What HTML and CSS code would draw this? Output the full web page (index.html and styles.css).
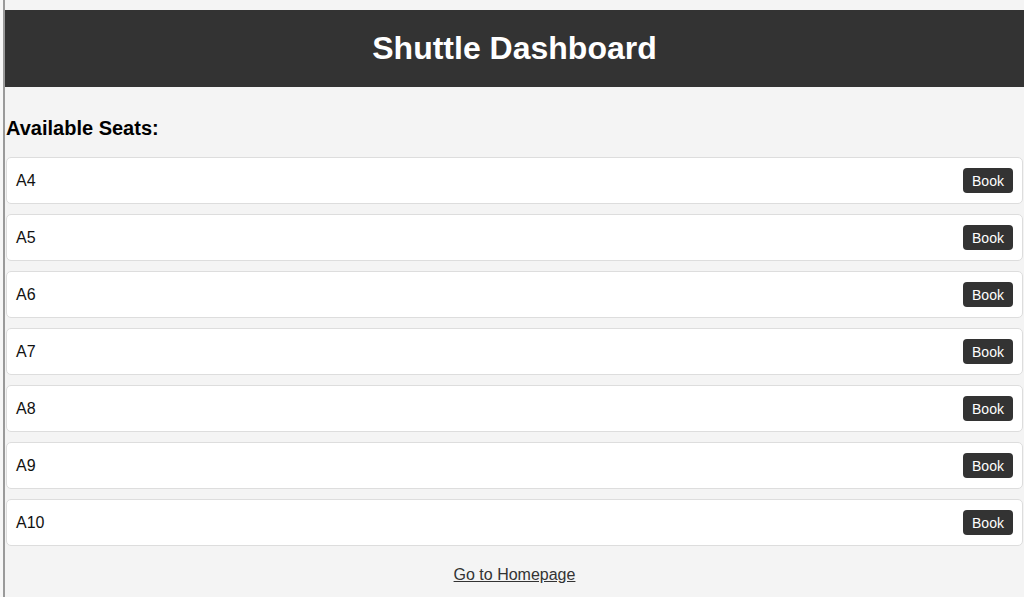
FILE: index.html
```html
<!DOCTYPE html>
<html lang="en">
<head>
<meta charset="utf-8">
<title>Shuttle Dashboard</title>
<link rel="stylesheet" href="styles.css">
</head>
<body>
<div class="strip"></div>
<div class="page">
  <header class="topbar">
    <h1 class="title">Shuttle Dashboard</h1>
  </header>
  <main class="content">
    <h2 class="section-title">Available Seats:</h2>
    <ul class="seat-list">
      <li class="seat"><span class="seat-name">A4</span><button class="book-btn">Book</button></li>
      <li class="seat"><span class="seat-name">A5</span><button class="book-btn">Book</button></li>
      <li class="seat"><span class="seat-name">A6</span><button class="book-btn">Book</button></li>
      <li class="seat"><span class="seat-name">A7</span><button class="book-btn">Book</button></li>
      <li class="seat"><span class="seat-name">A8</span><button class="book-btn">Book</button></li>
      <li class="seat"><span class="seat-name">A9</span><button class="book-btn">Book</button></li>
      <li class="seat"><span class="seat-name">A10</span><button class="book-btn">Book</button></li>
    </ul>
    <div class="footer-link"><a href="#" class="home-link">Go to Homepage</a></div>
  </main>
</div>
</body>
</html>
```

FILE: styles.css
```css
html, body {
  margin: 0;
  padding: 0;
  height: 100%;
}
body {
  display: flex;
  background: #f4f4f4;
  font-family: "Liberation Sans", Arial, sans-serif;
  color: #111;
  overflow: hidden;
}
.strip {
  width: 3px;
  flex: 0 0 3px;
  background: #f7f7f7;
  border-right: 2px solid #9a9a9a;
}
.page {
  flex: 1;
  padding-top: 10px;
  min-width: 0;
}
.topbar {
  background: #333;
  color: #fff;
  padding: 20px 0;
  text-align: center;
}
.title {
  margin: 0;
  font-size: 32px;
  line-height: 37px;
  font-weight: bold;
}
.content {
  padding: 0 1px;
}
.section-title {
  margin: 30px 0 17px 0;
  font-size: 20px;
  line-height: 23px;
  font-weight: bold;
  color: #000;
}
.seat-list {
  list-style: none;
  margin: 0;
  padding: 0;
  display: flex;
  flex-direction: column;
  gap: 10px;
}
.seat {
  display: flex;
  align-items: center;
  justify-content: space-between;
  background: #fff;
  border: 1px solid #dddddd;
  border-radius: 5px;
  padding: 10px 9px;
}
.seat-name {
  font-size: 16px;
  color: #111;
}
.book-btn {
  background: #333;
  color: #fff;
  border: none;
  border-radius: 4px;
  height: 25px;
  width: 50px;
  padding: 0;
  font-family: "Liberation Sans", Arial, sans-serif;
  font-size: 14px;
}
.footer-link {
  text-align: center;
  margin-top: 20px;
}
.home-link {
  color: #333;
  font-size: 16px;
  text-decoration: underline;
}
```
